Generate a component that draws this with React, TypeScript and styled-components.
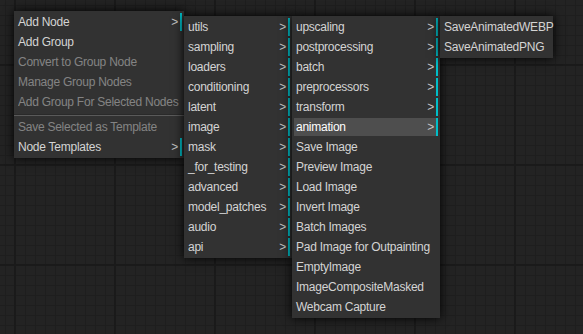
import styled, { createGlobalStyle } from "styled-components";

const GlobalStyle = createGlobalStyle`
  html, body {
    margin: 0;
    padding: 0;
    background: #222222;
  }
  body {
    font-family: "Liberation Sans", Arial, sans-serif;
  }
`;

// node graph canvas with its 10px / 100px grid
const Canvas = styled.div`
  position: relative;
  width: 583px;
  height: 334px;
  overflow: hidden;
  background-color: #232323;
  background-image: linear-gradient(to right, #1a1a1a 2px, transparent 2px),
    linear-gradient(to bottom, #1a1a1a 2px, transparent 2px),
    linear-gradient(to right, #1e1e1e 1px, transparent 1px),
    linear-gradient(to bottom, #1e1e1e 1px, transparent 1px);
  background-size: 100px 100%, 100% 100px, 10px 100%, 100% 10px;
  background-position: 14px 0, 0 64px, 5px 0, 0 5px;
`;

const Menu = styled.div<{ $x: number; $y: number; $w: number }>`
  position: absolute;
  left: ${(p) => p.$x}px;
  top: ${(p) => p.$y}px;
  width: ${(p) => p.$w}px;
  box-sizing: border-box;
  display: flex;
  flex-direction: column;
  gap: 2px;
  padding: 2px;
  background: #323232;
  box-shadow: 0 0 10px #000;
`;

const Entry = styled.div<{ $sub?: boolean; $disabled?: boolean; $hover?: boolean }>`
  position: relative;
  height: 14px;
  padding: 2px;
  font-size: 12px;
  line-height: 14px;
  letter-spacing: -0.25px;
  white-space: nowrap;
  color: ${(p) => (p.$hover ? "#ffffff" : "#d4d4d4")};
  background: ${(p) => (p.$hover ? "#4e4e4e" : "transparent")};
  opacity: ${(p) => (p.$disabled ? 0.5 : 1)};
  border-right: 2px solid ${(p) => (p.$sub ? "#00bec8" : "transparent")};

  &::after {
    content: "${(p) => (p.$sub ? ">" : "")}";
    position: absolute;
    top: 2px;
    right: 2px;
    color: #c4c4c4;
  }
`;

const Separator = styled.div`
  height: 0;
  margin: 1px -2px 0;
  border-top: 1px solid #2a2a2a;
  border-bottom: 1px solid #5a5a5a;
`;

type Item = { label: string; sub?: boolean; disabled?: boolean; hover?: boolean; sep?: boolean };

const mainMenu: Item[] = [
  { label: "Add Node", sub: true },
  { label: "Add Group" },
  { label: "Convert to Group Node", disabled: true },
  { label: "Manage Group Nodes", disabled: true },
  { label: "Add Group For Selected Nodes", disabled: true },
  { label: "", sep: true },
  { label: "Save Selected as Template", disabled: true },
  { label: "Node Templates", sub: true },
];

const categories: Item[] = [
  "utils",
  "sampling",
  "loaders",
  "conditioning",
  "latent",
  "image",
  "mask",
  "_for_testing",
  "advanced",
  "model_patches",
  "audio",
  "api",
].map((label) => ({ label, sub: true }));

const imageMenu: Item[] = [
  { label: "upscaling", sub: true },
  { label: "postprocessing", sub: true },
  { label: "batch", sub: true },
  { label: "preprocessors", sub: true },
  { label: "transform", sub: true },
  { label: "animation", sub: true, hover: true },
  { label: "Save Image" },
  { label: "Preview Image" },
  { label: "Load Image" },
  { label: "Invert Image" },
  { label: "Batch Images" },
  { label: "Pad Image for Outpainting" },
  { label: "EmptyImage" },
  { label: "ImageCompositeMasked" },
  { label: "Webcam Capture" },
];

const animationMenu: Item[] = [{ label: "SaveAnimatedWEBP" }, { label: "SaveAnimatedPNG" }];

function ContextMenu({ x, y, w, items }: { x: number; y: number; w: number; items: Item[] }) {
  return (
    <Menu $x={x} $y={y} $w={w}>
      {items.map((it, i) =>
        it.sep ? (
          <Separator key={i} />
        ) : (
          <Entry key={i} $sub={it.sub} $disabled={it.disabled} $hover={it.hover}>
            {it.label}
          </Entry>
        )
      )}
    </Menu>
  );
}

export default function App() {
  return (
    <>
      <GlobalStyle />
      <Canvas>
        <ContextMenu x={14} y={11} w={170} items={mainMenu} />
        <ContextMenu x={184} y={16} w={108} items={categories} />
        <ContextMenu x={292} y={16} w={148} items={imageMenu} />
        <ContextMenu x={440} y={16} w={113} items={animationMenu} />
      </Canvas>
    </>
  );
}
